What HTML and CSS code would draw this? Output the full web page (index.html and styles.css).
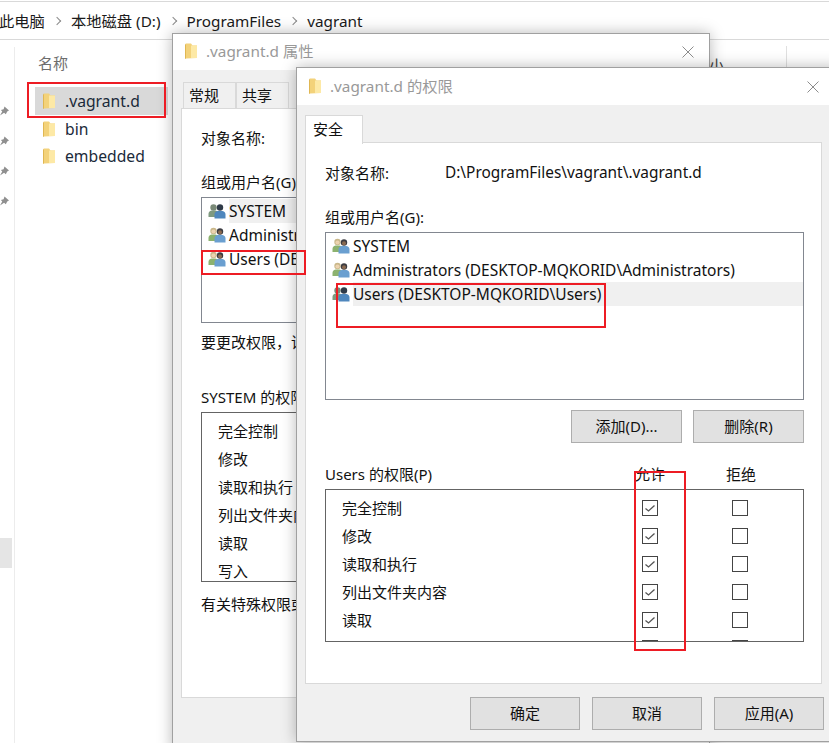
FILE: index.html
```html
<!DOCTYPE html>
<html lang="zh-CN">
<head>
<meta charset="utf-8">
<title>.vagrant.d 的权限</title>
<link rel="stylesheet" href="styles.css">
</head>
<body>
<svg class="defs" width="0" height="0" aria-hidden="true">
  <symbol id="folder" viewBox="0 0 12 16">
    <path d="M1 0.500h5l1.500 2H12v12.500l-11 0.500z" fill="#f3d27a"/>
    <path d="M6 2.500H12v12.500H6z" fill="#fde9a6"/>
    <path d="M1 0.500v15.500l-1-0.500V1.500z" fill="#e0b752"/>
  </symbol>
  <symbol id="group" viewBox="0 0 18 16">
    <circle cx="5.500" cy="4" r="3.200" fill="#c9b78a"/>
    <circle cx="5.500" cy="4.500" r="2.100" fill="#ecd3b0"/>
    <path d="M0.500 14v-3q0-3 3-3.500h4q3 0.500 3 3.500v3z" fill="#8cb26f"/>
    <circle cx="12" cy="4.500" r="3.200" fill="#3c3c42"/>
    <circle cx="12" cy="5.200" r="2" fill="#8a6a50"/>
    <path d="M6.500 15.500v-4q0-3 3-3.500h5q3 0.500 3 3.500v4z" fill="#6a9fd0"/>
  </symbol>
  <symbol id="group-dim" viewBox="0 0 18 16">
    <circle cx="5.500" cy="4.500" r="3.200" fill="#7a8a78"/>
    <path d="M0.500 14v-3q0-3 3-3.500h4q3 0.500 3 3.500v3z" fill="#7f9a80"/>
    <circle cx="12" cy="4.500" r="3.200" fill="#2f3a48"/>
    <path d="M6.500 15.500v-4q0-3 3-3.500h5q3 0.500 3 3.500v4z" fill="#4f87bd"/>
  </symbol>
  <symbol id="pin" viewBox="0 0 10 10">
    <path d="M5 0l5 4.500-2 1-1.500 3-2-1.500L0 10l2.500-4.500L1 4l3-1z" fill="#8f8f8f"/>
  </symbol>
  <symbol id="close" viewBox="0 0 12 12">
    <path d="M0.500 0.500l11 11M11.500 0.500l-11 11" stroke="#8c8c8c" stroke-width="1" fill="none"/>
  </symbol>
  <symbol id="tick" viewBox="0 0 14 14">
    <path d="M2.500 7.500l3 2.500 6-5.500" stroke="#555" stroke-width="1.300" fill="none"/>
  </symbol>
</svg>

<div class="explorer">
  <nav class="crumbs">
    <span class="crumb-first">此电脑</span><i class="sep"></i>
    <span>本地磁盘 (D:)</span><i class="sep"></i>
    <span>ProgramFiles</span><i class="sep"></i>
    <span>vagrant</span>
  </nav>
  <div class="browser">
    <aside class="quick">
      <svg class="pin"><use href="#pin"/></svg>
      <svg class="pin"><use href="#pin"/></svg>
      <svg class="pin"><use href="#pin"/></svg>
      <svg class="pin"><use href="#pin"/></svg>
      <div class="quick-active"></div>
    </aside>
    <section class="files">
      <div class="col-head">名称</div>
      <div class="file selected"><svg class="folder"><use href="#folder"/></svg>.vagrant.d</div>
      <div class="file"><svg class="folder"><use href="#folder"/></svg>bin</div>
      <div class="file"><svg class="folder"><use href="#folder"/></svg>embedded</div>
    </section>
    <div class="col-right"><span class="col-size">小</span><i class="col-line"></i></div>
  </div>
</div>

<!-- 属性对话框 -->
<div class="window props">
  <header class="title"><svg class="folder"><use href="#folder"/></svg><span>.vagrant.d 属性</span><svg class="close"><use href="#close"/></svg></header>
  <div class="tabs">
    <div class="tab">常规</div>
    <div class="tab">共享</div>
  </div>
  <div class="page props-page">
    <p class="label props-name">对象名称:</p>
    <p class="label props-group">组或用户名(G):</p>
    <div class="box props-users">
      <div class="user"><svg class="group"><use href="#group-dim"/></svg><span class="user-name">SYSTEM</span></div>
      <div class="user"><svg class="group"><use href="#group"/></svg>Administrators</div>
      <div class="user"><svg class="group"><use href="#group"/></svg>Users (DESKTOP-MQKORID\Users)</div>
    </div>
    <p class="label props-hint">要更改权限，请单击“编辑”。</p>
    <p class="label props-perm">SYSTEM 的权限(P)</p>
    <div class="box props-list">
      <div>完全控制</div><div>修改</div><div>读取和执行</div><div>列出文件夹内容</div><div>读取</div><div>写入</div>
    </div>
    <p class="label props-more">有关特殊权限或高级设置，请单击“高级”。</p>
  </div>
</div>

<!-- 权限对话框 -->
<div class="window perms">
  <header class="title"><svg class="folder"><use href="#folder"/></svg><span>.vagrant.d 的权限</span><svg class="close"><use href="#close"/></svg></header>
  <div class="tabs"><div class="tab active">安全</div></div>
  <div class="page perms-page">
    <div class="object-row"><span class="object-key">对象名称:</span><span>D:\ProgramFiles\vagrant\.vagrant.d</span></div>
    <p class="label perms-group">组或用户名(G):</p>
    <div class="box perms-users">
      <div class="user"><svg class="group"><use href="#group"/></svg>SYSTEM</div>
      <div class="user"><svg class="group"><use href="#group"/></svg>Administrators (DESKTOP-MQKORID\Administrators)</div>
      <div class="user"><svg class="group"><use href="#group-dim"/></svg><span class="user-name">Users (DESKTOP-MQKORID\Users)</span></div>
    </div>
    <div class="actions">
      <button class="btn small">添加(D)...</button>
      <button class="btn small">删除(R)</button>
    </div>
    <div class="perm-head"><span class="perm-title">Users 的权限(P)</span><span class="perm-col">允许</span><span class="perm-col">拒绝</span></div>
    <div class="box perm-list">
      <div class="perm-rows">
        <div class="perm-row"><span class="perm-name">完全控制</span><span class="check"><svg><use href="#tick"/></svg></span><span class="check"></span></div>
        <div class="perm-row"><span class="perm-name">修改</span><span class="check"><svg><use href="#tick"/></svg></span><span class="check"></span></div>
        <div class="perm-row"><span class="perm-name">读取和执行</span><span class="check"><svg><use href="#tick"/></svg></span><span class="check"></span></div>
        <div class="perm-row"><span class="perm-name">列出文件夹内容</span><span class="check"><svg><use href="#tick"/></svg></span><span class="check"></span></div>
        <div class="perm-row"><span class="perm-name">读取</span><span class="check"><svg><use href="#tick"/></svg></span><span class="check"></span></div>
        <div class="perm-row"><span class="perm-name"></span><span class="check"></span><span class="check"></span></div>
      </div>
      <div class="scrollbar">
        <svg class="arrow" viewBox="0 0 20 22"><path d="M5 14l5-5 5 5" stroke="#606060" stroke-width="2" fill="none"/></svg>
        <div class="thumb"></div>
        <svg class="arrow" viewBox="0 0 20 22"><path d="M5 8l5 5 5-5" stroke="#606060" stroke-width="2" fill="none"/></svg>
      </div>
    </div>
  </div>
  <footer class="footer">
    <button class="btn wide">确定</button>
    <button class="btn wide">取消</button>
    <button class="btn wide">应用(A)</button>
  </footer>
</div>

<!-- 红色标注框 -->
<div class="mark mark-file"></div>
<div class="mark mark-props"></div>
<div class="mark mark-perms"></div>
<div class="mark mark-allow"></div>
</body>
</html>
```
FILE: styles.css
```css
* { box-sizing: border-box; }
html, body { margin: 0; height: 100%; }
body {
  position: relative;
  width: 829px;
  height: 743px;
  overflow: hidden;
  background: #fff;
  color: #111;
  font: 15px/20px "Noto Sans", "Noto Sans CJK SC", sans-serif;
}
.defs { position: absolute; }
p { margin: 0; }
svg { display: block; }

/* 资源管理器背景 */
.explorer { display: flex; flex-direction: column; height: 743px; }
.crumbs {
  display: flex;
  align-items: center;
  height: 39px;
  margin-top: 1px;
  border-top: 1px solid #d9d9d9;
  border-bottom: 1px solid #d9d9d9;
  padding-top: 1px;
  font-size: 15.300px;
  color: #1a1a1a;
  white-space: nowrap;
}
.crumb-first { margin-left: -1px; }
.sep {
  width: 6px;
  height: 6px;
  margin: 0 11px 0 9px;
  border-top: 1.500px solid #8a8a8a;
  border-right: 1.500px solid #8a8a8a;
  transform: rotate(45deg);
}
.browser { flex: 1; display: flex; }
.quick {
  position: relative;
  width: 15px;
  border-right: 1px solid #ececec;
  padding-top: 59px;
  margin-top: 7px;
}
.pin { width: 9px; height: 10px; margin-bottom: 20px; }
.quick-active {
  position: absolute;
  left: 0;
  top: 491px;
  width: 12px;
  height: 30px;
  background: #e5e5e5;
}
.files { width: 160px; padding-left: 20px; }
.col-head { height: 47px; padding: 13px 0 0 3px; color: #6d6d6d; }
.file {
  display: flex;
  align-items: center;
  height: 27px;
  padding-left: 8px;
  font-size: 15.700px;
  color: #1a2a3a;
  white-space: nowrap;
}
.file.selected { background: #d9d9d9; height: 28px; width: 133px; }
.file .folder { margin-right: 10px; }
.folder { width: 12px; height: 16px; flex: none; }
.col-right { position: relative; flex: 1; }
.col-size { position: absolute; left: 534px; top: 15px; color: #444; }
.col-line { position: absolute; left: 611px; top: 6px; height: 32px; border-left: 1px solid #e0e0e0; }

/* 对话框 */
.window {
  position: absolute;
  background: #f0f0f0;
  border: 1px solid #a0a0a0;
  box-shadow: 0 0 14px rgba(0, 0, 0, 0.28);
}
.props { left: 172px; top: 33px; width: 538px; height: 720px; }
.perms { left: 296px; top: 67px; width: 545px; height: 675px; }
.title {
  display: flex;
  align-items: center;
  height: 36px;
  padding: 0 0 2px 12px;
  background: #fff;
  color: #999;
  font-size: 15.300px;
}
.perms .title { height: 37px; }
.title .folder { margin-right: 9px; }
.close { width: 12px; height: 12px; position: absolute; top: 12px; }
.props .close { left: 509px; }
.perms .close { left: 510px; top: 13px; }
.tabs { display: flex; }
.props .tabs { margin: 12px 0 0 10px; height: 26px; }
.perms .tabs { margin: 10px 0 0 8px; height: 28px; position: relative; z-index: 1; }
.tab {
  width: 53px;
  height: 26px;
  padding: 2px 0 0 5px;
  background: #f0f0f0;
  border: 1px solid #d9d9d9;
  border-bottom: 0;
}
.tab.active {
  width: 58px;
  height: 29px;
  padding: 3px 0 0 7px;
  background: #fff;
}
.page { background: #fff; border: 1px solid #d9d9d9; position: relative; }
.props-page { margin-left: 8px; width: 529px; height: 590px; padding: 19px 0 0 19px; white-space: nowrap; }
.props-group { margin-top: 24px; }
.box { border: 1px solid #828790; background: #fff; }
.props-users { width: 300px; height: 126px; margin-top: 5px; padding-top: 1px; }
.user {
  display: flex;
  align-items: center;
  height: 24px;
  padding-left: 6px;
  white-space: nowrap;
  font-size: 15.500px;
}
.group { width: 18px; height: 16px; margin-right: 3px; flex: none; }
.props-hint { margin-top: 9px; }
.props-perm { margin-top: 35px; }
.props-list { width: 300px; height: 170px; margin-top: 5px; padding: 4px 0 0 16px; border-color: #646464; }
.props-list div { height: 28px; line-height: 28px; }
.props-more { margin-top: 12px; }

.perms-page { margin-left: 8px; width: 517px; height: 542px; margin-top: -1px; padding: 20px 0 0 19px; }
.object-row { display: flex; font-size: 15.400px; }
.object-key { width: 120px; font-size: 15px; }
.perms-group { margin-top: 24px; }
.perms-users { width: 479px; height: 168px; margin-top: 5px; padding-top: 1px; }
.user-name { flex: 1; height: 24px; line-height: 24px; background: #f0f0f0; }
.actions { display: flex; justify-content: flex-end; gap: 11px; width: 479px; margin-top: 10px; }
.btn {
  border: 1px solid #adadad;
  background: #e1e1e1;
  color: #111;
  font: inherit;
  padding: 0 0 2px;
}
.small { width: 111px; height: 33px; }
.wide { width: 110px; height: 33px; }
.perm-head { display: flex; width: 479px; margin-top: 21px; }
.perm-title { width: 310px; flex: none; }
.perm-col { width: 91px; flex: none; }
.perm-list { display: flex; width: 479px; height: 153px; margin-top: 5px; border-color: #646464; overflow: hidden; }
.perm-rows { flex: 1; padding-top: 4px; }
.perm-row { display: flex; align-items: center; height: 28px; }
.perm-name { width: 316px; padding-left: 16px; }
.check { width: 16px; height: 16px; border: 1px solid #444; margin-right: 74px; flex: none; background: #fff; }
.check svg { width: 14px; height: 14px; }
.scrollbar { width: 20px; margin-right: 1px; background: #f0f0f0; display: flex; flex-direction: column; }
.arrow { width: 20px; height: 21px; flex: none; }
.thumb { height: 81px; background: #cdcdcd; margin-bottom: auto; }
.footer { display: flex; justify-content: flex-end; gap: 12px; padding: 13px 16px 0 0; }

/* 红色标注框 */
.mark { position: absolute; border: 2px solid #ed1c24; }
.mark-file { left: 27px; top: 82px; width: 139px; height: 36px; }
.mark-props { left: 201px; top: 250px; width: 105px; height: 25px; }
.mark-perms { left: 336px; top: 283px; width: 270px; height: 45px; }
.mark-allow { left: 634px; top: 471px; width: 52px; height: 180px; }
```
